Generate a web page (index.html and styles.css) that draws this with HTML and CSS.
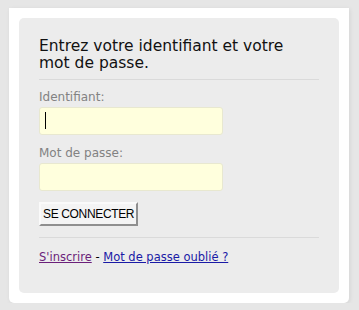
FILE: index.html
```html
<!DOCTYPE html>
<html lang="fr">
<head>
  <meta charset="UTF-8" />
  <title>Connexion</title>
  <link rel="stylesheet" href="styles.css">
</head>
<body>

<div class="page">
  <div class="login-box">
    <h2 class="title">Entrez votre identifiant et votre mot de passe.</h2>
    <hr class="sep">
    <form class="login-form">
      <label class="lbl" for="login">Identifiant:</label>
      <div class="field-wrap">
        <input class="field" type="text" id="login">
        <span class="caret"></span>
      </div>
      <label class="lbl" for="pass">Mot de passe:</label>
      <div class="field-wrap">
        <input class="field" type="password" id="pass">
      </div>
      <button class="btn" type="button">SE CONNECTER</button>
    </form>
    <hr class="sep">
    <div class="links">
      <a href="#" class="visited">S'inscrire</a> - <a href="#">Mot de passe oublié ?</a>
    </div>
  </div>
</div>

</body>
</html>
```

FILE: styles.css
```css
body {
  background-color: #e6e6e6;
  margin: 0;
  padding: 0;
  font-family: 'DejaVu Sans', Verdana, sans-serif;
}

.page {
  background: #fff;
  margin: 8px 10px 0 9px;
  padding: 10px;
  height: 275px;
  border-radius: 0 0 5px 5px;
  box-shadow: 1px 1px 4px rgba(0,0,0,0.08);
}

.login-box {
  background: #ececec;
  border-radius: 5px;
  padding: 20px 20px 0 20px;
  height: 255px;
}

.title {
  font-size: 15.5px;
  font-weight: normal;
  line-height: 17px;
  color: #111;
  margin: 0 0 7px 0;
  max-width: 265px;
}

.sep {
  border: 0;
  border-top: 1px solid #dadada;
  margin: 0;
}

.login-form {
  display: flex;
  flex-direction: column;
  align-items: flex-start;
  padding-top: 10px;
}

.lbl {
  font-size: 12px;
  line-height: 15px;
  color: #828282;
  margin-bottom: 2px;
}

.field-wrap {
  position: relative;
  margin: 0 0 11px 0;
}

.field {
  display: block;
  box-sizing: border-box;
  width: 184px;
  height: 28px;
  background: #ffffdd;
  border: 1px solid #e8e8d0;
  border-radius: 3px;
  margin: 0;
  padding: 0 5px;
  font-size: 13px;
  outline: none;
}

.caret {
  position: absolute;
  left: 6px;
  top: 5px;
  width: 1px;
  height: 17px;
  background: #000;
}

.btn {
  box-sizing: border-box;
  height: 24px;
  padding: 0 2px;
  margin: 0 0 11px 0;
  font-family: 'Liberation Sans', Arial, sans-serif;
  font-size: 12px;
  letter-spacing: -0.35px;
  color: #000;
  background: #f4f4f4;
  border: 2px solid;
  border-color: #fafafa #8f8f8f #8f8f8f #fafafa;
}

.links {
  font-size: 11.5px;
  padding-top: 12px;
  color: #000;
}

.links a {
  color: #1a1aa6;
}

.links a.visited {
  color: #6b1f7a;
}
```
